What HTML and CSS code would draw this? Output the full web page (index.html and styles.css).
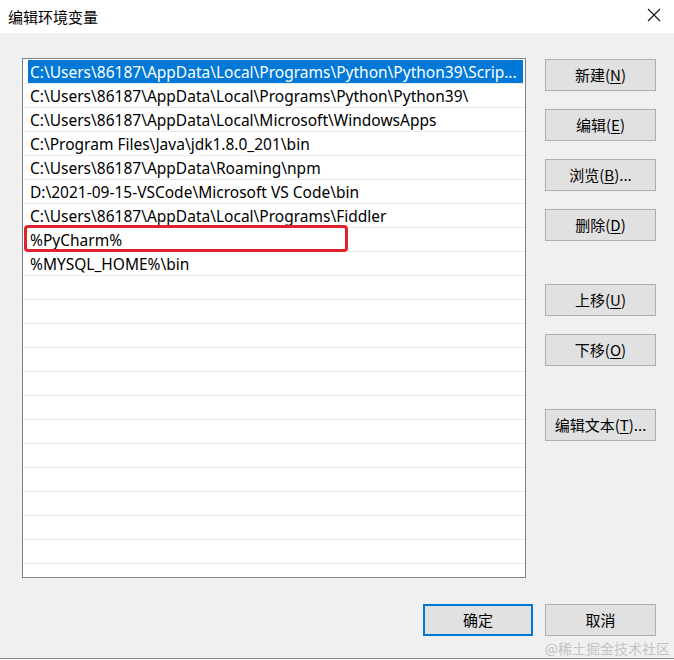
FILE: index.html
```html
<!DOCTYPE html>
<html lang="zh-CN">
<head>
<meta charset="utf-8">
<title>编辑环境变量</title>
<link rel="stylesheet" href="styles.css">
</head>
<body>
<div class="window">
  <div class="titlebar">
    <span class="title">编辑环境变量</span>
    <svg class="close" width="14" height="14" viewBox="0 0 14 14"><path d="M1 1 L13 13 M13 1 L1 13" stroke="#111" stroke-width="1.1" fill="none"/></svg>
  </div>
  <div class="content">
    <div class="main">
      <div class="list">
        <div class="row selected"><span class="hl">C:\Users\86187\AppData\Local\Programs\Python\Python39\Scrip...</span></div>
        <div class="row">C:\Users\86187\AppData\Local\Programs\Python\Python39\</div>
        <div class="row">C:\Users\86187\AppData\Local\Microsoft\WindowsApps</div>
        <div class="row">C:\Program Files\Java\jdk1.8.0_201\bin</div>
        <div class="row">C:\Users\86187\AppData\Roaming\npm</div>
        <div class="row">D:\2021-09-15-VSCode\Microsoft VS Code\bin</div>
        <div class="row">C:\Users\86187\AppData\Local\Programs\Fiddler</div>
        <div class="row marked">%PyCharm%<span class="redbox"></span></div>
        <div class="row">%MYSQL_HOME%\bin</div>
        <div class="row"></div>
        <div class="row"></div>
        <div class="row"></div>
        <div class="row"></div>
        <div class="row"></div>
        <div class="row"></div>
        <div class="row"></div>
        <div class="row"></div>
        <div class="row"></div>
        <div class="row"></div>
        <div class="row"></div>
        <div class="row"></div>
        <div class="row"></div>
      </div>
      <div class="side">
        <div class="group">
          <button class="btn">新建(<u>N</u>)</button>
          <button class="btn">编辑(<u>E</u>)</button>
          <button class="btn">浏览(<u>B</u>)...</button>
          <button class="btn">删除(<u>D</u>)</button>
        </div>
        <div class="group">
          <button class="btn">上移(<u>U</u>)</button>
          <button class="btn">下移(<u>O</u>)</button>
        </div>
        <div class="group">
          <button class="btn">编辑文本(<u>T</u>)...</button>
        </div>
      </div>
    </div>
    <div class="footer">
      <button class="btn primary">确定</button>
      <button class="btn">取消</button>
    </div>
  </div>
  <div class="watermark">@稀土掘金技术社区</div>
</div>
</body>
</html>
```

FILE: styles.css
```css
html, body {
  margin: 0;
  padding: 0;
  background: #ffffff;
}
body {
  font-family: "Noto Sans", "Noto Sans CJK SC", sans-serif;
  font-size: 15px;
  color: #000;
}
.window {
  position: relative;
  width: 674px;
  height: 658px;
  background: #f0f0f0;
  border-bottom: 1px solid #8c8c8c;
  overflow: hidden;
}
.titlebar {
  height: 33px;
  background: #ffffff;
  display: flex;
  align-items: center;
  justify-content: space-between;
  padding: 0 13px 0 8px;
}
.title {
  font-family: "Noto Sans CJK SC", sans-serif;
  font-size: 15px;
  line-height: 18px;
}
.close {
  display: block;
  margin-top: -4px;
}
.content {
  padding: 25px 18px 0 22px;
}
.main {
  display: flex;
  gap: 19px;
}
.list {
  box-sizing: border-box;
  width: 504px;
  height: 520px;
  border: 1px solid #828282;
  background: #ffffff;
  padding-top: 1px;
  overflow: hidden;
}
.row {
  position: relative;
  box-sizing: border-box;
  height: 24px;
  line-height: 24px;
  font-size: 15.5px;
  border-bottom: 1px solid #ececec;
  padding-left: 7px;
  white-space: nowrap;
}
.row.selected {
  padding-left: 0;
}
.hl {
  display: block;
  height: 23px;
  margin: 0 2px 0 5px;
  padding-left: 2px;
  background: #0078d7;
  color: #ffffff;
  overflow: hidden;
}
.redbox {
  position: absolute;
  left: 1px;
  top: -3px;
  width: 324px;
  height: 27px;
  box-sizing: border-box;
  border: 3px solid #e0232a;
  border-radius: 4px;
}
.side {
  display: flex;
  flex-direction: column;
  gap: 43px;
  padding-top: 1px;
}
.group {
  display: flex;
  flex-direction: column;
  gap: 18px;
}
.btn {
  box-sizing: border-box;
  width: 111px;
  height: 32px;
  padding: 0;
  background: #e1e1e1;
  border: 1px solid #adadad;
  font-family: "Noto Sans CJK SC", sans-serif;
  font-size: 15px;
  color: #000;
  line-height: 20px;
}
.btn u {
  text-underline-offset: 2px;
}
.footer {
  display: flex;
  justify-content: flex-end;
  gap: 12px;
  margin-top: 26px;
}
.btn.primary {
  width: 110px;
  border: 2px solid #0078d7;
}
.watermark {
  position: absolute;
  right: 4px;
  bottom: 1px;
  font-family: "Noto Sans CJK SC", sans-serif;
  font-size: 14px;
  line-height: 18px;
  color: #c4c4c4;
}
```
